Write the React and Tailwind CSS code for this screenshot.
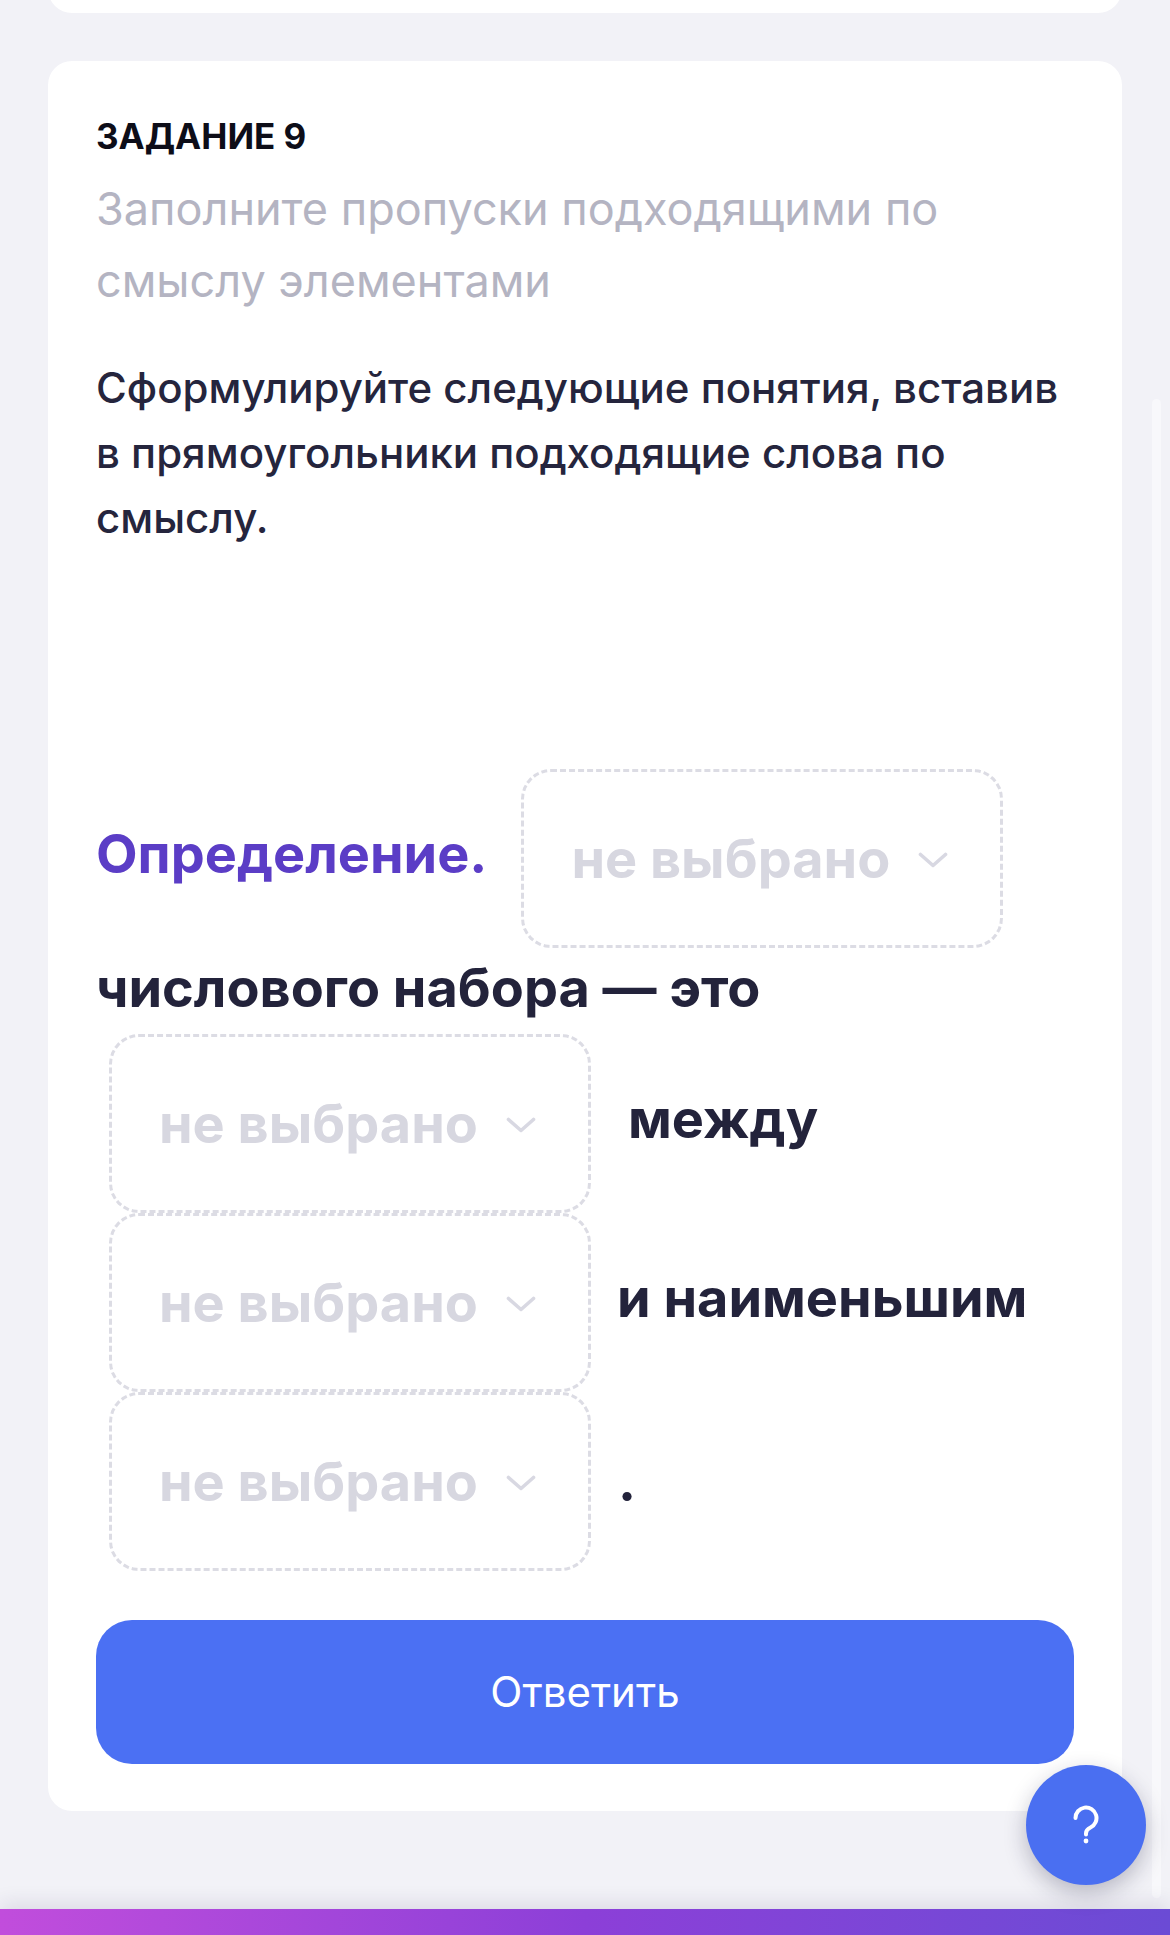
import React from "react";

function Chevron() {
  return (
    <svg width="30" height="17" viewBox="0 0 30 17" fill="none" className="shrink-0 mt-[4px]">
      <polyline points="2.5,2.5 15,13.5 27.5,2.5" stroke="#d8d8e2" strokeWidth="3.6" strokeLinecap="round" strokeLinejoin="round" />
    </svg>
  );
}

function Select({ className = "" }) {
  return (
    <div className={"flex h-[179px] w-[482px] shrink-0 items-center rounded-[30px] border-[3px] border-dashed border-[#dcdce4] pl-[47px] " + className}>
      <span className="text-[54px] font-bold leading-[72px] text-[#d7d7e0] whitespace-nowrap">не выбрано</span>
      <span className="ml-[28px]"><Chevron /></span>
    </div>
  );
}

function Word({ children, className = "" }) {
  return (
    <span className={"text-[54px] font-bold leading-[72px] whitespace-nowrap " + className}>{children}</span>
  );
}

export default function App() {
  return (
    <div className="relative h-[1935px] w-[1170px] overflow-hidden bg-[#f2f2f7] font-[Inter,'Noto_Sans',sans-serif]">
      <div className="mx-[48px] -mt-[87px] h-[100px] rounded-[24px] bg-white" />

      <section className="mx-[48px] mt-[48px] rounded-[24px] bg-white px-[48px] pt-[51px] pb-[47px]">
        <h2 className="text-[35px] font-bold leading-[48px] text-[#0d0d18]">ЗАДАНИЕ 9</h2>
        <p className="mt-[13px] text-[45px] leading-[72px] text-[#b4b4c2]">
          Заполните пропуски подходящими по
          <br />
          смыслу элементами
        </p>
        <p className="mt-[38px] text-[42px] font-medium leading-[65px] text-[#25253d]">
          Сформулируйте следующие понятия, вставив
          <br />
          в прямоугольники подходящие слова по
          <br />
          смыслу.
        </p>

        <div className="mt-[219px] flex flex-col">
          <div className="flex items-center">
            <Word className="mb-[9px] text-[#5b3dc6]">Определение.</Word>
            <Select className="ml-[34px]" />
          </div>
          <div className="flex h-[86px] items-start">
            <Word className="leading-[80px] text-[#23233b]">числового набора — это</Word>
          </div>
          <div className="flex items-center">
            <Select className="ml-[13px]" />
            <Word className="mb-[9px] ml-[37px] text-[#23233b]">между</Word>
          </div>
          <div className="flex items-center">
            <Select className="ml-[13px]" />
            <Word className="mb-[10px] ml-[26px] text-[#23233b]">и наименьшим</Word>
          </div>
          <div className="flex items-center">
            <Select className="ml-[13px]" />
            <Word className="ml-[27px] text-[#23233b]">.</Word>
          </div>
        </div>

        <button className="mt-[49px] flex h-[144px] w-full items-center justify-center rounded-[36px] bg-[#4b70f3] text-[42px] leading-[56px] text-white">
          Ответить
        </button>
      </section>

      <div className="absolute left-[1152px] top-[399px] h-[1499px] w-[9px] rounded-full bg-[#f8f8fb]" />

      <div className="absolute bottom-0 left-0 right-0 h-[26px] bg-linear-to-r from-[#c14ddc] via-[#8c3fd8] to-[#6b4bd5] shadow-[0_-6px_20px_rgba(40,30,80,0.10)]" />

      <button className="absolute left-[1026px] top-[1765px] flex h-[120px] w-[120px] items-center justify-center rounded-full bg-[#4a6ff1] shadow-[0_8px_22px_rgba(30,30,60,0.28)]">
        <svg width="28" height="40" viewBox="0 0 28 40" fill="none">
          <path d="M3.5 13 A10.5 10.5 0 1 1 18.5 22.5 C15.8 23.8 14 25.6 14 28.2 V29.5" stroke="white" strokeWidth="4" strokeLinecap="round" fill="none" />
          <circle cx="14" cy="36" r="2.4" fill="white" />
        </svg>
      </button>
    </div>
  );
}
